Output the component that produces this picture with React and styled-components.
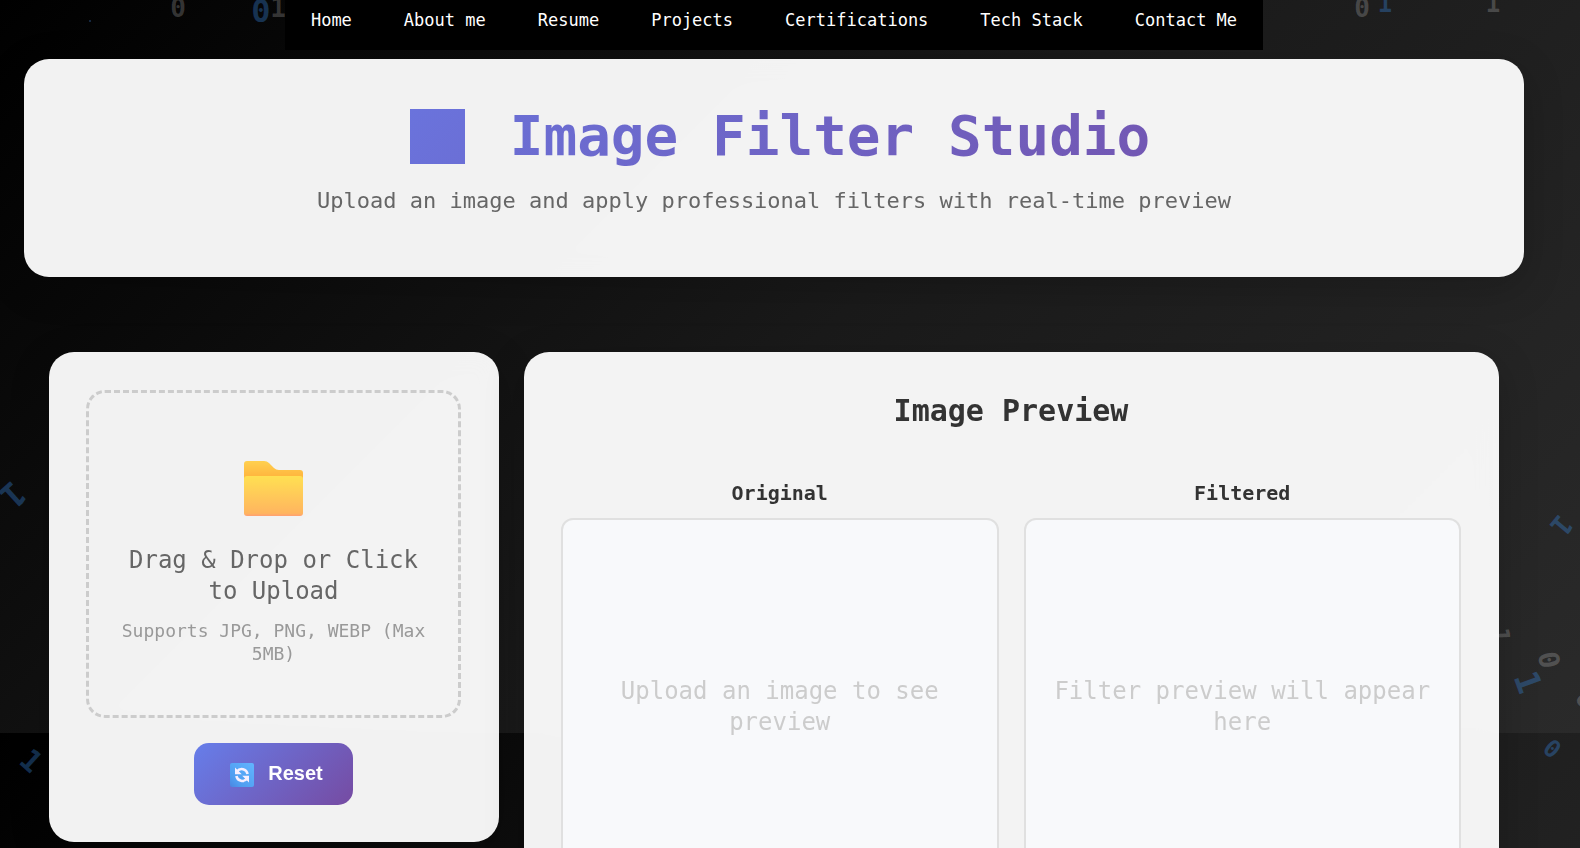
import React from 'react';
import styled, { createGlobalStyle, css } from 'styled-components';

const GlobalStyle = createGlobalStyle`
  *, *::before, *::after { box-sizing: border-box; }
  html {
    background: linear-gradient(135deg, #000 0%, #1a1a1a 50%, #2a2a2a 100%) 0 0 / 100% 733px repeat-y;
  }
  body {
    margin: 0;
    font-family: "DejaVu Sans Mono", "Liberation Mono", monospace;
    color: #333;
  }
  h1, h2, h3, p, ul { margin: 0; padding: 0; }
`;

const Page = styled.div`
  position: relative;
  overflow: hidden;
  padding: 0 56px 24px 24px;
`;

const BinaryRain = styled.div`
  position: absolute;
  inset: 0;
  overflow: hidden;
  pointer-events: none;
`;

const Digit = styled.span`
  position: absolute;
  left: ${(p) => p.$x}px;
  top: ${(p) => p.$y}px;
  font-size: ${(p) => p.$size}px;
  line-height: 1;
  font-weight: bold;
  color: ${(p) => (p.$blue ? 'rgba(56, 136, 225, 0.35)' : 'rgba(255, 255, 255, 0.2)')};
  transform: translate(-50%, -50%) rotate(${(p) => p.$turn}deg);
`;

const Speck = styled.span`
  position: absolute;
  left: 89px;
  top: 20px;
  width: 2px;
  height: 2px;
  border-radius: 1px;
  background: #1d3555;
`;

const Content = styled.div`
  position: relative;
`;

const Nav = styled.nav`
  display: flex;
  justify-content: center;
`;

const NavList = styled.ul`
  display: flex;
  list-style: none;
  height: 50px;
  background: #000;
`;

const NavLink = styled.a`
  display: block;
  padding: 10px 26px;
  font-size: 17px;
  line-height: 20px;
  color: #fff;
  text-decoration: none;
`;

const card = css`
  background: rgba(255, 255, 255, 0.95);
  border-radius: 25px;
  box-shadow: 0 10px 40px rgba(0, 0, 0, 0.2);
  backdrop-filter: blur(12px);
`;

const Hero = styled.header`
  ${card}
  margin-top: 9px;
  padding: 39px 38px 61px;
  text-align: center;
`;

const Title = styled.h1`
  display: flex;
  justify-content: center;
  align-items: center;
  font-size: 56px;
  line-height: 76px;
  font-weight: bold;
  color: transparent;
  background: linear-gradient(135deg, #667eea, #764ba2);
  background-clip: text;
  -webkit-background-clip: text;
`;

const TitleMark = styled.span`
  width: 55px;
  height: 55px;
  margin: 0 45px 0 12px;
  background: linear-gradient(135deg, #6a73dc, #6b6fd6);
`;

const Subtitle = styled.p`
  margin-top: 11px;
  font-size: 22px;
  line-height: 31px;
  color: #666;
`;

const Workspace = styled.main`
  display: grid;
  grid-template-columns: 450px minmax(0, 1fr);
  align-items: start;
  gap: 25px;
  padding: 75px 25px 0;
`;

const Panel = styled.section`
  ${card}
  padding: 38px 38px 37px 37px;
`;

const DropZone = styled.label`
  display: flex;
  flex-direction: column;
  align-items: center;
  padding: 68px 25px 50px;
  border: 3px dashed #ccc;
  border-radius: 19px;
  text-align: center;
  cursor: pointer;
`;

const FileInput = styled.input`
  position: absolute;
  width: 1px;
  height: 1px;
  opacity: 0;
`;

const DropText = styled.span`
  margin-top: 28px;
  font-size: 24px;
  line-height: 31px;
  color: #666;
`;

const DropHint = styled.span`
  margin-top: 12px;
  font-size: 18px;
  line-height: 23px;
  color: #999;
`;

const Actions = styled.div`
  display: flex;
  justify-content: center;
  margin-top: 25px;
`;

const ResetButton = styled.button`
  display: flex;
  align-items: center;
  gap: 14px;
  height: 62px;
  padding: 0 30px 2px 36px;
  border: 0;
  border-radius: 15px;
  background: linear-gradient(135deg, #667eea, #764ba2);
  color: #fff;
  font: bold 20px "Liberation Sans", Arial, sans-serif;
  cursor: pointer;

  svg {
    margin-top: 3px;
  }
`;

const PanelTitle = styled.h2`
  font-size: 30px;
  line-height: 42px;
  text-align: center;
`;

const Previews = styled.div`
  display: grid;
  grid-template-columns: repeat(2, minmax(0, 1fr));
  gap: 25px;
  margin-top: 48px;
`;

const Preview = styled.div`
  text-align: center;
`;

const PreviewLabel = styled.h3`
  font-size: 20px;
  line-height: 26px;
`;

const PreviewBox = styled.div`
  display: flex;
  align-items: center;
  justify-content: center;
  height: 378px;
  margin-top: 12px;
  padding: 0 25px;
  border: 2px solid #e0e0e0;
  border-radius: 12px;
  background: #f8f9fb;
  font-size: 24px;
  line-height: 31px;
  color: #ccc;
`;

const FolderIcon = () => (
  <svg width="60" height="56" viewBox="0 0 60 56" aria-hidden="true">
    <defs>
      <linearGradient id="folderBack" x1="0" y1="0" x2="0" y2="1">
        <stop offset="0" stopColor="#ffd04f" />
        <stop offset="0.5" stopColor="#ffb73f" />
      </linearGradient>
      <linearGradient id="folderFront" x1="0" y1="0" x2="0" y2="1">
        <stop offset="0" stopColor="#ffe052" />
        <stop offset="0.93" stopColor="#ffb55f" />
        <stop offset="1" stopColor="#ff9f72" />
      </linearGradient>
    </defs>
    <path d="M0 3Q0 0 3 0H20Q23 0 25 2L30 7Q32 9 35 9H56Q59 9 59 12V30H0Z" fill="url(#folderBack)" />
    <rect y="15" width="59" height="40" rx="3" fill="url(#folderFront)" />
  </svg>
);

const RefreshIcon = () => (
  <svg width="24" height="24" viewBox="0 0 24 24" aria-hidden="true">
    <defs>
      <linearGradient id="refreshTile" x1="0" y1="1" x2="1" y2="0">
        <stop offset="0" stopColor="#4a85e0" />
        <stop offset="0.25" stopColor="#4f9df0" />
        <stop offset="1" stopColor="#62b5ff" />
      </linearGradient>
    </defs>
    <rect width="24" height="24" rx="2" fill="url(#refreshTile)" />
    <g fill="none" stroke="#f6efff" strokeWidth="2.6">
      <path d="M7 8.500C10 4.500 16.500 5.500 17.600 11" />
      <path d="M17 15.500C14 19.500 7.500 18.500 6.400 13" />
    </g>
    <path d="M5 4.500V11.300H11.800ZM19 19.500V12.700H12.200Z" fill="#f6efff" />
  </svg>
);

const LINKS = ['Home', 'About me', 'Resume', 'Projects', 'Certifications', 'Tech Stack', 'Contact Me'];

const DIGITS = [
  { value: '0', x: 178, y: 8, size: 26, turn: 0 },
  { value: '0', x: 261, y: 11, size: 32, turn: 0, blue: true },
  { value: '1', x: 278, y: 8, size: 26, turn: 0 },
  { value: '0', x: 1362, y: 8, size: 26, turn: 0 },
  { value: '1', x: 1385, y: 4, size: 24, turn: 0, blue: true },
  { value: '1', x: 1493, y: 4, size: 24, turn: 0 },
  { value: '1', x: 13, y: 495, size: 34, turn: 138, blue: true },
  { value: '1', x: 31, y: 761, size: 30, turn: 42, blue: true },
  { value: '1', x: 1561, y: 525, size: 28, turn: 130, blue: true },
  { value: '1', x: 1500, y: 635, size: 26, turn: 88 },
  { value: '0', x: 1548, y: 660, size: 28, turn: 80 },
  { value: '1', x: 1528, y: 682, size: 34, turn: 70, blue: true },
  { value: '0', x: 1586, y: 699, size: 26, turn: 60 },
  { value: '0', x: 1552, y: 749, size: 24, turn: 40, blue: true },
];

const PREVIEWS = [
  { label: 'Original', text: 'Upload an image to see preview' },
  { label: 'Filtered', text: 'Filter preview will appear here' },
];

export default function App() {
  return (
    <Page>
      <GlobalStyle />
      <BinaryRain aria-hidden="true">
        <Speck />
        {DIGITS.map((d, i) => (
          <Digit key={i} $x={d.x} $y={d.y} $size={d.size} $turn={d.turn} $blue={d.blue}>
            {d.value}
          </Digit>
        ))}
      </BinaryRain>
      <Content>
        <Nav>
          <NavList>
            {LINKS.map((name) => (
              <li key={name}>
                <NavLink href="#">{name}</NavLink>
              </li>
            ))}
          </NavList>
        </Nav>
        <Hero>
          <Title>
            <TitleMark />
            Image Filter Studio
          </Title>
          <Subtitle>Upload an image and apply professional filters with real-time preview</Subtitle>
        </Hero>
        <Workspace>
          <Panel>
            <DropZone htmlFor="image-file">
              <FolderIcon />
              <DropText>Drag &amp; Drop or Click to Upload</DropText>
              <DropHint>Supports JPG, PNG, WEBP (Max 5MB)</DropHint>
              <FileInput id="image-file" type="file" accept="image/*" />
            </DropZone>
            <Actions>
              <ResetButton type="button">
                <RefreshIcon />
                Reset
              </ResetButton>
            </Actions>
          </Panel>
          <Panel>
            <PanelTitle>Image Preview</PanelTitle>
            <Previews>
              {PREVIEWS.map((p) => (
                <Preview key={p.label}>
                  <PreviewLabel>{p.label}</PreviewLabel>
                  <PreviewBox>{p.text}</PreviewBox>
                </Preview>
              ))}
            </Previews>
          </Panel>
        </Workspace>
      </Content>
    </Page>
  );
}
